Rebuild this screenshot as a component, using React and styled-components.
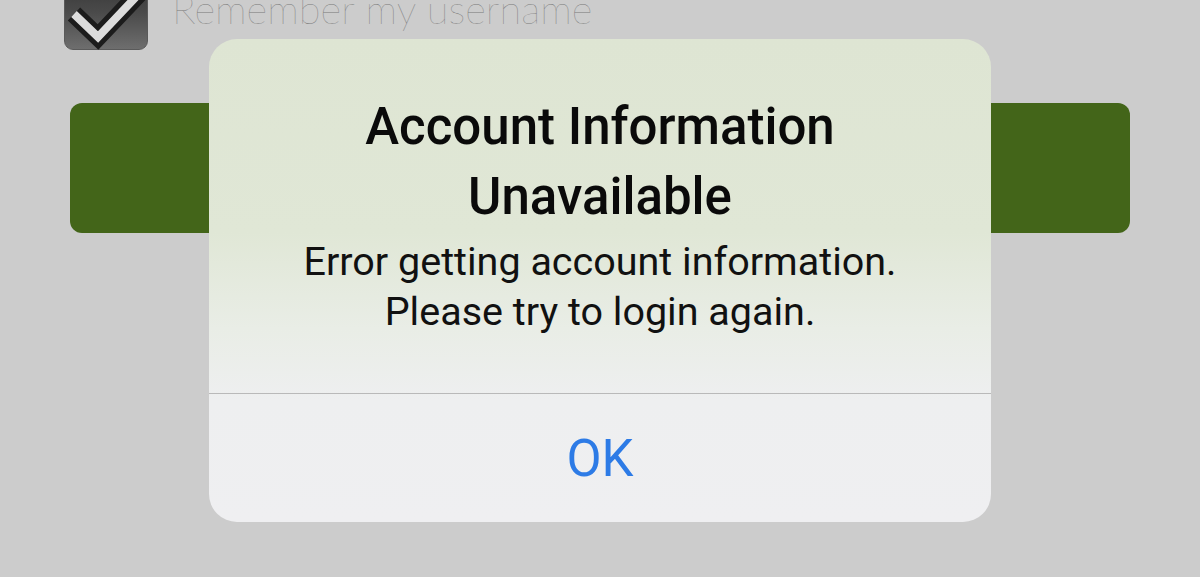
import React from 'react'
import styled, { createGlobalStyle } from 'styled-components'

const Global = createGlobalStyle`
  html, body {
    margin: 0;
    padding: 0;
    background: #cccccc;
    overflow: hidden;
  }
  #root {
    width: 1200px;
    height: 577px;
  }
`

function App() {
  return (
    <>
      <Global />
      <Page>
        <RememberRow>
          <CheckBox>
            <svg width="85" height="85" viewBox="0 0 85 85">
              <polyline points="9,47 33,70 86,14" fill="none" stroke="#1c1c1c" strokeWidth="18" strokeLinejoin="miter" />
              <polyline points="9,47 33,70 86,14" fill="none" stroke="#dcdcdc" strokeWidth="8" strokeLinejoin="miter" />
            </svg>
          </CheckBox>
          <RememberLabel>Remember my username</RememberLabel>
        </RememberRow>
        <LoginButton />
      </Page>

      <Alert>
        <AlertBody>
          <Title>Account Information<br />Unavailable</Title>
          <Message>Error getting account information.<br />Please try to login again.</Message>
        </AlertBody>
        <ActionButton>OK</ActionButton>
      </Alert>
    </>
  )
}

export default App

let Page = styled.div`
  width: 1200px;
  height: 577px;
  display: flex;
  flex-direction: column;
  padding: 0 70px;
  box-sizing: border-box;
  position: relative;
`

let RememberRow = styled.div`
  display: flex;
  align-items: center;
  gap: 24px;
  margin-top: -34px;
  margin-left: -6px;
`

let CheckBox = styled.div`
  width: 84px;
  height: 84px;
  border-radius: 9px;
  background: linear-gradient(180deg, #2e2e2e 0%, #4a4a4a 55%, #6e6e6e 100%);
  border: 1px solid #5a5a5a;
  box-sizing: border-box;
  overflow: visible;
  svg {
    display: block;
    overflow: visible;
  }
`

let RememberLabel = styled.span`
  font-family: Lato, "Liberation Sans", sans-serif;
  font-weight: 100;
  font-size: 40px;
  color: #7a7a7a;
  margin-top: 2px;
`

let LoginButton = styled.div`
  margin-top: 53px;
  height: 130px;
  background: #436519;
  border-radius: 12px;
`

let Alert = styled.div`
  position: absolute;
  left: 209px;
  top: 39px;
  width: 782px;
  height: 483px;
  border-radius: 28px;
  overflow: hidden;
  display: flex;
  flex-direction: column;
  background: linear-gradient(180deg, #dee5d3 0%, #e0e7d6 40%, #e9ede6 60%, #eeeff0 75%, #efeff1 100%);
  font-family: Roboto, "Noto Sans", sans-serif;
  text-align: center;
`

let AlertBody = styled.div`
  padding: 53px 10px 0;
  height: 355px;
  box-sizing: border-box;
  border-bottom: 1px solid #b9b9b9;
  display: flex;
  flex-direction: column;
  gap: 5px;
`

let Title = styled.div`
  font-size: 51px;
  font-weight: 500;
  line-height: 70px;
  color: #0a0a0a;
`

let Message = styled.div`
  font-size: 39.5px;
  font-weight: 400;
  line-height: 50px;
  color: #111;
`

let ActionButton = styled.div`
  flex: 1;
  display: flex;
  align-items: center;
  justify-content: center;
  font-size: 51px;
  color: #2d7be6;
`
